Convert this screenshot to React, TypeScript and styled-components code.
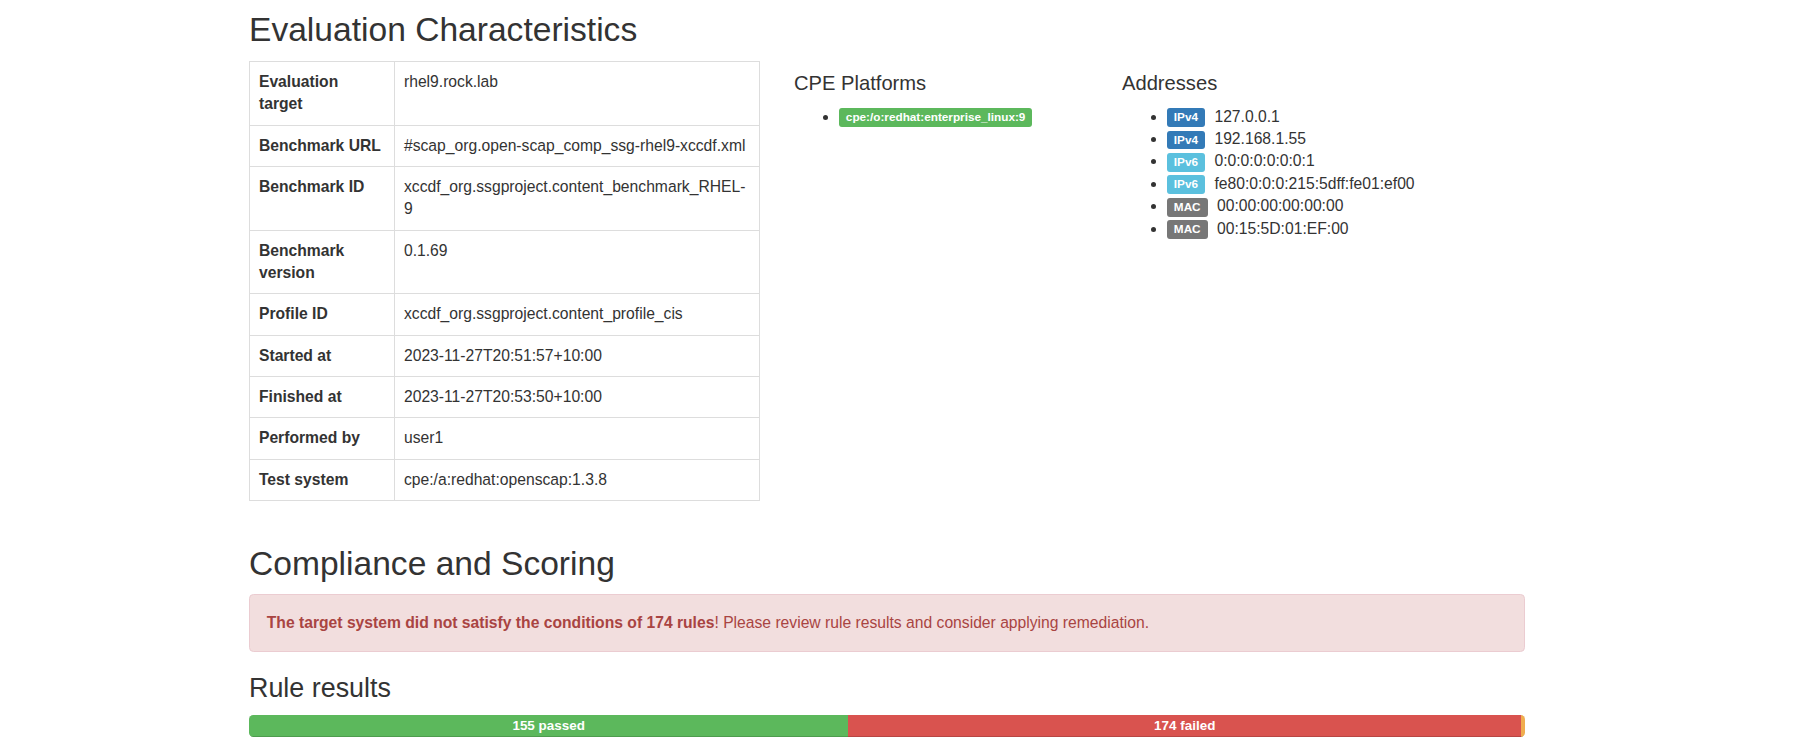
import React from 'react';
import styled, { createGlobalStyle } from 'styled-components';

const GlobalStyle = createGlobalStyle`
  html, body {
    margin: 0;
    padding: 0;
    background: #fff;
    overflow: hidden;
  }
  body {
    font-family: "Liberation Sans", Arial, Helvetica, sans-serif;
    font-size: 15.68px;
    line-height: 22.4px;
    color: #333;
  }
  *, *::before, *::after { box-sizing: border-box; }
`;

const Container = styled.div`
  width: 1276px;
  margin-left: 249px;
`;

const SectionTitle = styled.h2<{ $first?: boolean }>`
  font-size: 33.6px;
  line-height: 36.96px;
  font-weight: 500;
  margin: ${(p) => (p.$first ? '12px 0 12px' : '22.4px 0 11.2px')};
`;

const SubTitle = styled.h3`
  font-size: 26.88px;
  line-height: 29.57px;
  font-weight: 500;
  margin: 22.4px 0 11.2px;
`;

const SideTitle = styled.h4`
  font-size: 20.16px;
  line-height: 22.18px;
  font-weight: 500;
  margin: 11.2px 0;
`;

const Row = styled.div`
  display: grid;
  grid-template-columns: 511px 294px 1fr;
  column-gap: 34px;
  align-items: start;
`;

const Column = styled.div``;

const InfoTable = styled.table`
  width: 100%;
  table-layout: fixed;
  border-collapse: collapse;
  border-spacing: 0;
  margin-bottom: 22.4px;
  border: 1px solid #ddd;
`;

const HeadCell = styled.th`
  text-align: left;
  font-weight: bold;
  vertical-align: top;
  padding: 8.96px;
  border: 1px solid #ddd;
  line-height: 22.4px;
`;

const ValueCell = styled.td`
  vertical-align: top;
  padding: 8.96px;
  border: 1px solid #ddd;
  line-height: 22.4px;
`;

const List = styled.ul`
  margin: 0 0 11.2px;
  padding-left: 44.8px;
`;

const labelColors = {
  primary: '#337ab7',
  info: '#5bc0de',
  default: '#777777',
  success: '#5cb85c',
} as const;

const Label = styled.span<{ $variant: keyof typeof labelColors }>`
  display: inline;
  padding: 0.2em 0.6em 0.3em;
  font-size: 75%;
  font-weight: bold;
  line-height: 1;
  color: #fff;
  text-align: center;
  white-space: nowrap;
  vertical-align: baseline;
  border-radius: 0.25em;
  background-color: ${(p) => labelColors[p.$variant]};
`;

const AddressValue = styled.span`
  margin-left: 5px;
`;

const Alert = styled.div`
  padding: 16.8px;
  margin-bottom: 22.4px;
  border: 1px solid #ebccd1;
  border-radius: 4.48px;
  background-color: #f2dede;
  color: #a94442;
`;

const Progress = styled.div`
  display: flex;
  height: 22.4px;
  margin-bottom: 22.4px;
  overflow: hidden;
  background-color: #f5f5f5;
  border-radius: 4.48px;
  box-shadow: inset 0 1px 2px rgba(0, 0, 0, 0.1);
`;

const barColors = {
  success: '#5cb85c',
  danger: '#d9534f',
  warning: '#f0ad4e',
} as const;

const Bar = styled.div<{ $variant: keyof typeof barColors }>`
  flex: none;
  height: 100%;
  font-size: 13.44px;
  line-height: 22.4px;
  font-weight: bold;
  color: #fff;
  text-align: center;
  white-space: nowrap;
  overflow: hidden;
  background-color: ${(p) => barColors[p.$variant]};
  box-shadow: inset 0 -1px 0 rgba(0, 0, 0, 0.15);
`;

const characteristics: [string, string][] = [
  ['Evaluation target', 'rhel9.rock.lab'],
  ['Benchmark URL', '#scap_org.open-scap_comp_ssg-rhel9-xccdf.xml'],
  ['Benchmark ID', 'xccdf_org.ssgproject.content_benchmark_RHEL-9'],
  ['Benchmark version', '0.1.69'],
  ['Profile ID', 'xccdf_org.ssgproject.content_profile_cis'],
  ['Started at', '2023-11-27T20:51:57+10:00'],
  ['Finished at', '2023-11-27T20:53:50+10:00'],
  ['Performed by', 'user1'],
  ['Test system', 'cpe:/a:redhat:openscap:1.3.8'],
];

const addresses: { kind: string; variant: keyof typeof labelColors; value: string }[] = [
  { kind: 'IPv4', variant: 'primary', value: '127.0.0.1' },
  { kind: 'IPv4', variant: 'primary', value: '192.168.1.55' },
  { kind: 'IPv6', variant: 'info', value: '0:0:0:0:0:0:0:1' },
  { kind: 'IPv6', variant: 'info', value: 'fe80:0:0:0:215:5dff:fe01:ef00' },
  { kind: 'MAC', variant: 'default', value: '00:00:00:00:00:00' },
  { kind: 'MAC', variant: 'default', value: '00:15:5D:01:EF:00' },
];

const results = { passed: 155, failed: 174, other: 1 };

export default function App() {
  const total = results.passed + results.failed + results.other;
  const pct = (n: number) => `${(n / total) * 100}%`;
  return (
    <>
      <GlobalStyle />
      <Container>
        <SectionTitle $first>Evaluation Characteristics</SectionTitle>
        <Row>
          <Column>
            <InfoTable>
              <colgroup>
                <col style={{ width: 145 }} />
                <col />
              </colgroup>
              <tbody>
                {characteristics.map(([k, v]) => (
                  <tr key={k}>
                    <HeadCell>{k}</HeadCell>
                    <ValueCell>{v}</ValueCell>
                  </tr>
                ))}
              </tbody>
            </InfoTable>
          </Column>
          <Column>
            <SideTitle>CPE Platforms</SideTitle>
            <List>
              <li>
                <Label $variant="success">cpe:/o:redhat:enterprise_linux:9</Label>
              </li>
            </List>
          </Column>
          <Column>
            <SideTitle>Addresses</SideTitle>
            <List>
              {addresses.map((a) => (
                <li key={a.value}>
                  <Label $variant={a.variant}>{a.kind}</Label> <AddressValue>{a.value}</AddressValue>
                </li>
              ))}
            </List>
          </Column>
        </Row>

        <SectionTitle>Compliance and Scoring</SectionTitle>
        <Alert>
          <strong>The target system did not satisfy the conditions of 174 rules</strong>! Please review rule results and
          consider applying remediation.
        </Alert>
        <SubTitle>Rule results</SubTitle>
        <Progress>
          <Bar $variant="success" style={{ width: pct(results.passed) }}>
            {results.passed} passed
          </Bar>
          <Bar $variant="danger" style={{ width: pct(results.failed) }}>
            {results.failed} failed
          </Bar>
          <Bar $variant="warning" style={{ width: pct(results.other) }} />
        </Progress>
      </Container>
    </>
  );
}
